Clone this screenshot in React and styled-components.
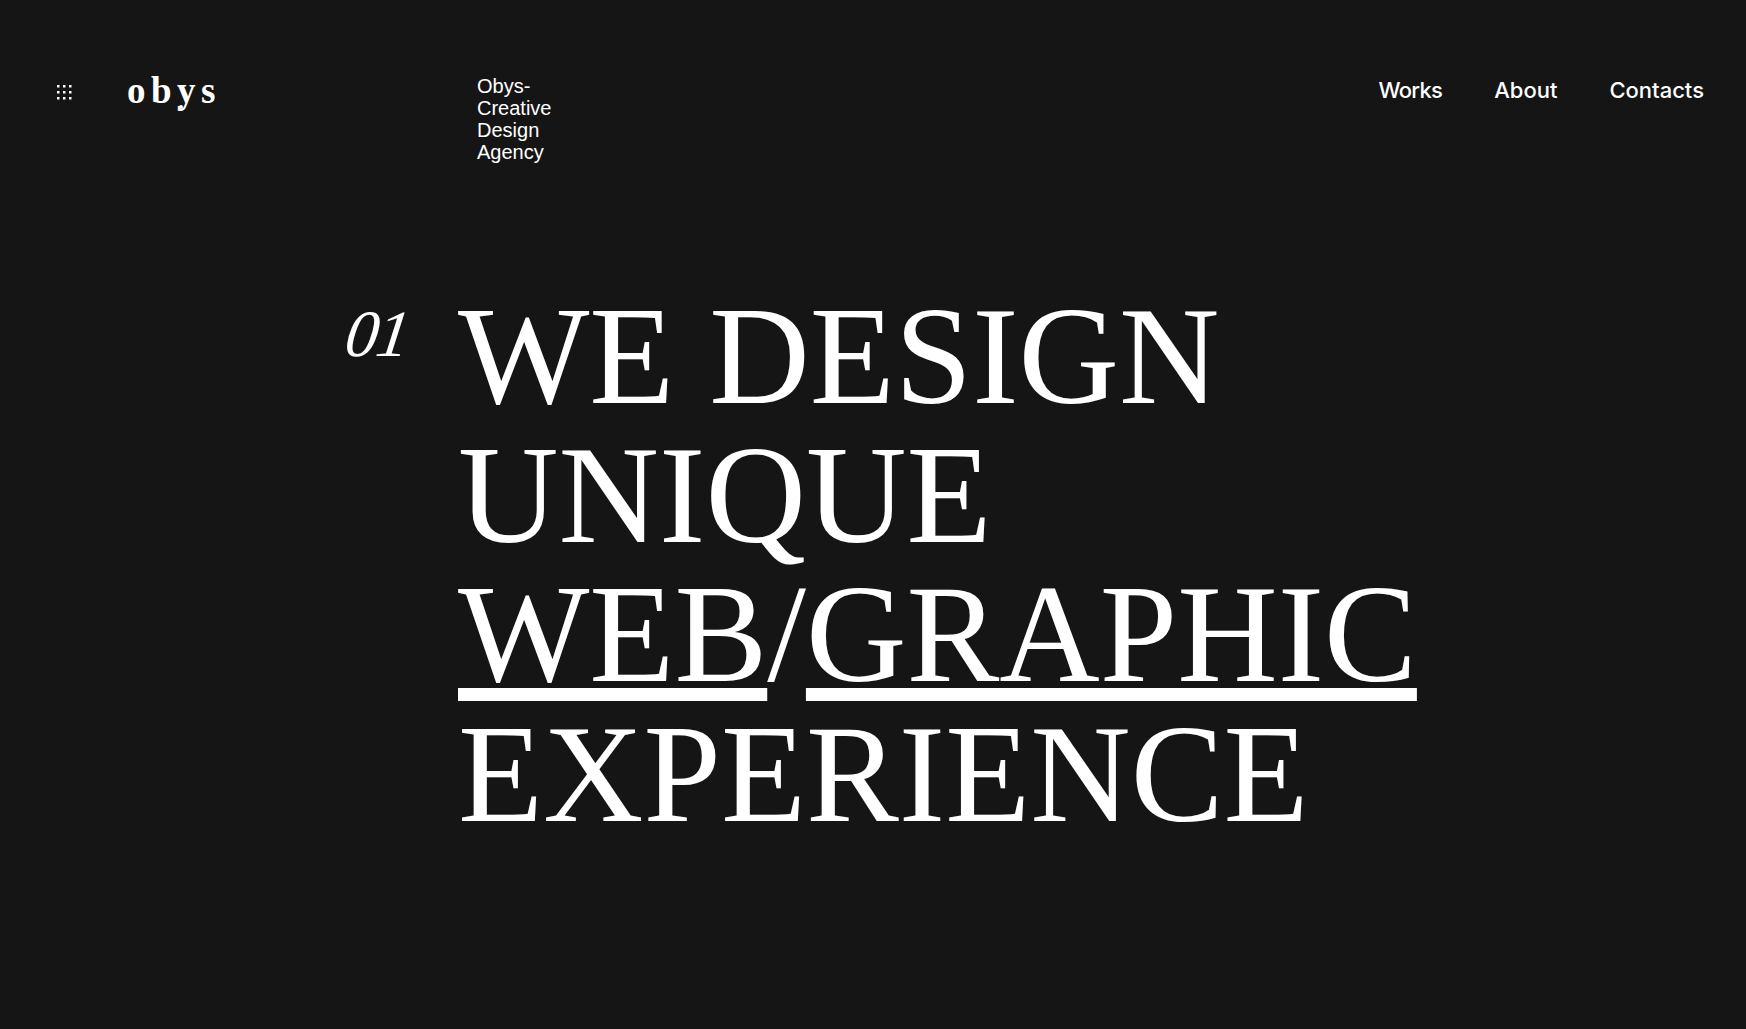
import React from 'react'
import styled, { createGlobalStyle } from 'styled-components'

const GlobalStyle = createGlobalStyle`
    html, body{
        margin: 0;
        padding: 0;
        background: #151515;
    }
    body{
        color: #fff;
        font-family: "Liberation Sans", Arial, sans-serif;
    }
`;

const PageStyled = styled.div`
    min-height: 1029px;
    background: #151515;
    overflow: hidden;
`;

const Header = styled.header`
    display: flex;
    align-items: flex-start;
    padding: 74px 42px 0 57px;
`;

const Brand = styled.div`
    display: flex;
    align-items: center;
    gap: 54px;
    width: 420px;
    height: 34px;
    svg{
        margin-top: 4px;
    }
`;

const Logo = styled.div`
    position: relative;
    font-family: "Liberation Serif", serif;
    font-weight: 700;
    font-size: 37px;
    line-height: 34px;
    letter-spacing: 5.5px;
    span{
        position: absolute;
        left: 52px;
        top: 31px;
        width: 4px;
        height: 4px;
        border-radius: 50%;
        background: #fff;
    }
`;

const Tagline = styled.p`
    margin: 1px 0 0;
    width: 90px;
    font-size: 20px;
    line-height: 22px;
`;

const Nav = styled.nav`
    margin-left: auto;
    display: flex;
    gap: 52px;
`;

const NavLink = styled.a`
    font-family: Inter, sans-serif;
    font-weight: 500;
    font-size: 22px;
    line-height: 32px;
    letter-spacing: ${props => props.$spacing || '0'};
    color: #fff;
    text-decoration: none;
`;

const Hero = styled.section`
    display: flex;
    align-items: flex-start;
    padding: 124px 0 0 346px;
`;

const Number = styled.div`
    width: 112px;
    padding-top: 14px;
    font-family: "Liberation Serif", serif;
    font-style: italic;
    font-size: 66px;
    line-height: 66px;
    letter-spacing: -2px;
    span{
        display: inline-block;
        transform: skewX(-8deg);
    }
`;

const Title = styled.h1`
    margin: 0;
    font-family: "Liberation Serif", serif;
    font-weight: 400;
    font-size: 139.2px;
    line-height: 139.2px;
    white-space: nowrap;
    u{
        text-decoration: underline;
        text-decoration-thickness: 13px;
        text-underline-offset: 7px;
        text-decoration-skip-ink: none;
    }
`;

function DotsIcon() {
    const cells = [0, 1, 2]
    return (
        <svg width="16" height="16" viewBox="0 0 16 16" fill="#fff">
            {cells.map(row => cells.map(col => (
                <rect key={`${row}-${col}`} x={col * 6} y={row * 6} width="2.5" height="2.5" />
            )))}
        </svg>
    )
}

export default function App() {
    return (
        <PageStyled>
            <GlobalStyle />
            <Header>
                <Brand>
                    <DotsIcon />
                    <Logo>obys<span /></Logo>
                </Brand>
                <Tagline>Obys-Creative Design Agency</Tagline>
                <Nav>
                    <NavLink href="#works" $spacing="-0.7px">Works</NavLink>
                    <NavLink href="#about">About</NavLink>
                    <NavLink href="#contacts">Contacts</NavLink>
                </Nav>
            </Header>
            <Hero>
                <Number><span>01</span></Number>
                <Title>
                    WE DESIGN<br />
                    UNIQUE<br />
                    <u>WEB</u>/<u>GRAPHIC</u><br />
                    EXPERIENCE
                </Title>
            </Hero>
        </PageStyled>
    )
}
